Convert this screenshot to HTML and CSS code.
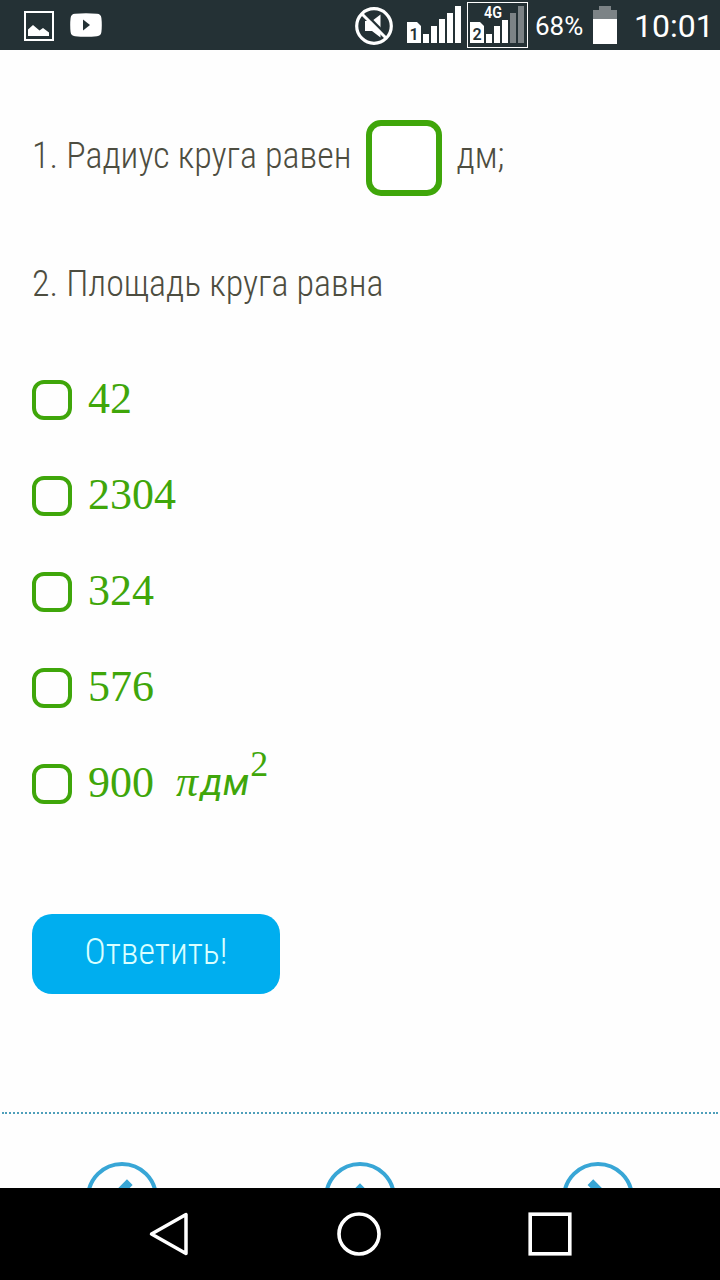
FILE: index.html
```html
<!DOCTYPE html>
<html lang="ru">
<head>
  <meta charset="UTF-8" />
  <meta name="viewport" content="width=device-width, initial-scale=1.0"/>
  <title>Радиус и площадь круга</title>
  <link rel="stylesheet" href="styles.css">
</head>
<body>
  <header class="status-bar">
    <svg class="icon-picture" width="30" height="30" viewBox="0 0 30 30">
      <rect x="1" y="1" width="28" height="28" fill="none" stroke="#fff" stroke-width="2"/>
      <path d="M4 25V18.500L9 14L15.500 19.500L19 17L25 21.500V25Z" fill="#fff"/>
    </svg>
    <svg class="icon-video" width="32" height="24" viewBox="0 0 32 24">
      <path d="M5 .8Q16-.4 27 .8Q31 1 31.4 5Q32.2 12 31.4 19Q31 23 27 23.2Q16 24.4 5 23.2Q1 23 .6 19Q-.2 12 .6 5Q1 1 5 .8Z" fill="#fff"/>
      <path d="M13 6.500V17.500L20 12Z" fill="#243135"/>
    </svg>
    <svg class="icon-mute" width="38" height="38" viewBox="0 0 38 38">
      <path d="M10 14H17L25.500 7.500V30.500L17 24H10Z" fill="#fff"/>
      <path d="M8.500 5L33 29.500" stroke="#243135" stroke-width="2.500"/>
      <circle cx="19" cy="19" r="17.300" fill="none" stroke="#fff" stroke-width="3.200"/>
      <path d="M7 7L31 31" stroke="#fff" stroke-width="3"/>
    </svg>
    <svg class="icon-sim" width="55" height="38" viewBox="0 0 55 38">
      <path d="M0 16H10L14 20V37H0Z" fill="#fff"/>
      <text class="sim-number" x="7" y="34">1</text>
      <path d="M16 28H22V37H16ZM24 20H30V37H24ZM32 13H38V37H32ZM40 7H46V37H40ZM48 0H54V37H48Z" fill="#fff"/>
    </svg>
    <svg class="icon-sim-active" width="61" height="46" viewBox="0 0 61 46">
      <rect x=".5" y=".5" width="60" height="45" fill="none" stroke="#fff"/>
      <path d="M3 20H13L17 24V41H3Z" fill="#fff"/>
      <text class="sim-number" x="10" y="38">2</text>
      <text class="network" x="26" y="16" textLength="18" lengthAdjust="spacingAndGlyphs">4G</text>
      <path d="M19 32H25V41H19ZM27 24H33V41H27ZM35 18H41V41H35Z" fill="#fff"/>
      <path d="M43 11H49V41H43ZM51 4H57V41H51Z" fill="#7c8386"/>
    </svg>
    <span class="battery-level">68%</span>
    <svg class="icon-battery" width="24" height="38" viewBox="0 0 24 38">
      <path d="M6 0H18V4H24V13H0V4H6Z" fill="#7c8386"/>
      <rect y="13" width="24" height="25" fill="#fff"/>
    </svg>
    <span class="clock">10:01</span>
  </header>

  <main class="task">
    <div class="question question-radius">
      <label for="radius"><span class="narrow">1. Радиус круга равен</span></label>
      <input type="text" id="radius" class="answer-input" />
      <span class="narrow">дм;</span>
    </div>
    <div class="question question-area"><span class="narrow">2. Площадь круга равна</span></div>

    <div class="options">
      <label class="option"><input type="checkbox" class="check" /><span class="number">42</span></label>
      <label class="option"><input type="checkbox" class="check" /><span class="number">2304</span></label>
      <label class="option"><input type="checkbox" class="check" /><span class="number">324</span></label>
      <label class="option"><input type="checkbox" class="check" /><span class="number">576</span></label>
      <label class="option"><input type="checkbox" class="check" /><span class="number">900</span><span class="unit"><span class="pi">π</span><span class="dm">дм</span><sup>2</sup></span></label>
    </div>

    <button class="submit"><span class="narrow">Ответить!</span></button>

    <div class="pager">
      <svg width="72" height="72" viewBox="0 0 72 72">
        <circle cx="36" cy="36" r="34" fill="none" stroke="#38a6d6" stroke-width="4"/>
        <path d="M43.800 20.200L28 36L43.800 51.800" fill="none" stroke="#38a6d6" stroke-width="8"/>
      </svg>
      <svg width="72" height="72" viewBox="0 0 72 72">
        <circle cx="36" cy="36" r="34" fill="none" stroke="#38a6d6" stroke-width="4"/>
        <path d="M20 43L36 27L52 43" fill="none" stroke="#38a6d6" stroke-width="8"/>
      </svg>
      <svg width="72" height="72" viewBox="0 0 72 72">
        <circle cx="36" cy="36" r="34" fill="none" stroke="#38a6d6" stroke-width="4"/>
        <path d="M28.400 20.200L44.200 36L28.400 51.800" fill="none" stroke="#38a6d6" stroke-width="8"/>
      </svg>
    </div>
  </main>

  <nav class="nav-bar">
    <svg width="40" height="44" viewBox="0 0 40 44">
      <path d="M37 2.500V41.500L2.500 22Z" fill="none" stroke="#fff" stroke-width="3.500" stroke-linejoin="round"/>
    </svg>
    <svg width="44" height="44" viewBox="0 0 44 44">
      <circle cx="22" cy="22" r="20" fill="none" stroke="#fff" stroke-width="3.600"/>
    </svg>
    <svg width="44" height="44" viewBox="0 0 44 44">
      <rect x="2.200" y="2.200" width="39.600" height="39.600" fill="none" stroke="#fff" stroke-width="3.600"/>
    </svg>
  </nav>
</body>
</html>
```

FILE: styles.css
```css
* {
  box-sizing: border-box;
}

body {
  margin: 0;
  height: 1280px;
  display: flex;
  flex-direction: column;
  overflow: hidden;
  background: #fefefe;
  font-family: Roboto, sans-serif;
}

svg {
  display: block;
  flex: none;
}

.status-bar {
  height: 50px;
  flex: none;
  display: flex;
  align-items: flex-start;
  padding-left: 24px;
  background: #243135;
  color: #fff;
}

.icon-picture { margin-top: 11px; }
.icon-video { margin: 13px 0 0 16px; }
.icon-mute { margin: 7px 0 0 253px; }
.icon-sim { margin: 6px 0 0 14px; }
.icon-sim-active { margin: 2px 0 0 5px; }
.icon-battery { margin-top: 6px; }

.sim-number {
  font-size: 16px;
  font-weight: 600;
  text-anchor: middle;
  fill: #243135;
}

.network {
  font-size: 17px;
  font-weight: 600;
  text-anchor: middle;
  fill: #fff;
}

.battery-level {
  width: 58px;
  margin-left: 7px;
  font-size: 26px;
  line-height: 53px;
}

.clock {
  margin-left: 17px;
  font-size: 32px;
  line-height: 52px;
}

.task {
  height: 1138px;
  flex: none;
  overflow: hidden;
  display: flex;
  flex-direction: column;
  align-items: flex-start;
}

.task > * {
  flex: none;
}

.question {
  display: flex;
  align-items: center;
  margin-left: 32px;
  font-size: 36px;
  color: #4d4d40;
}

.narrow {
  display: block;
  font-family: "Roboto Condensed", Roboto, sans-serif;
  font-stretch: 75%;
  font-weight: 300;
  white-space: nowrap;
}

.question-radius {
  height: 76px;
  margin-top: 70px;
}

.question-radius .narrow {
  padding-bottom: 4px;
}

.answer-input {
  width: 76px;
  height: 76px;
  margin: 0 15px 0 14px;
  padding: 4px;
  border: 6px solid #3fa60a;
  border-radius: 15px;
  background: #fff;
  font-size: 30px;
  text-align: center;
}

.question-area {
  height: 44px;
  margin-top: 66px;
}

.options {
  display: flex;
  flex-direction: column;
  gap: 56px;
  margin: 74px 0 0 32px;
}

.option {
  height: 40px;
  display: flex;
  align-items: center;
  color: #3fa60a;
}

.check {
  appearance: none;
  width: 40px;
  height: 40px;
  margin: 0 16px 0 0;
  border: 4px solid #3fa60a;
  border-radius: 12px;
}

.number,
.unit {
  padding-bottom: 3px;
  font-family: "Liberation Serif", serif;
  font-size: 44px;
  line-height: 40px;
}

.unit {
  display: flex;
  margin-left: 22px;
}

.pi {
  width: 25px;
  font-style: italic;
}

.dm {
  padding-top: 1px;
  font-family: Roboto, sans-serif;
  font-size: 37px;
  font-style: italic;
}

.unit sup {
  margin-left: 1px;
  font-size: 36px;
  line-height: 4px;
}

.submit {
  width: 248px;
  height: 80px;
  margin: 110px 0 0 32px;
  padding: 0 0 4px;
  display: flex;
  align-items: center;
  justify-content: center;
  border: none;
  border-radius: 20px;
  background: #00aeef;
  color: #d9ffff;
  font-size: 36px;
}

.pager {
  width: 716px;
  margin: 118px 2px 0;
  padding: 48px 84px 0;
  display: flex;
  justify-content: space-between;
  border-top: 2px dotted #4e9fba;
}

.nav-bar {
  height: 92px;
  flex: none;
  display: flex;
  align-items: center;
  justify-content: space-between;
  padding: 0 148px 0 149px;
  background: #000;
}
```
